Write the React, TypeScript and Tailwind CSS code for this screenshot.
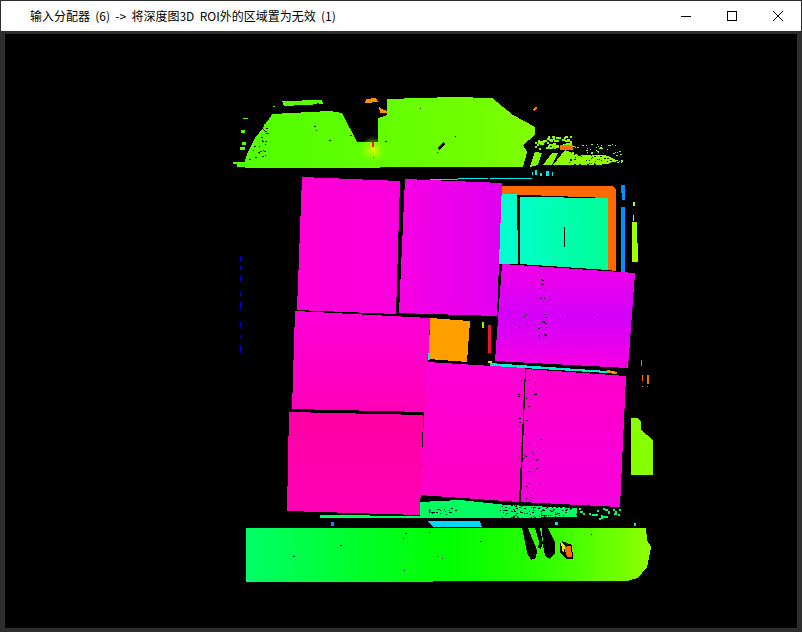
import React from 'react';

// deterministic speckle so the depth noise stays the same between renders.
// slant pushes the top rows to the right, size is the dot size in px
const speckle = (x: number, y: number, w: number, h: number, count: number, seed: number, size = 1, slant = 0) => {
  let s = seed;
  const rnd = () => {
    s = (s * 16807) % 2147483647;
    return s / 2147483647;
  };
  let d = '';
  for (let i = 0; i < count; i++) {
    const v = rnd();
    const u = rnd();
    const py = Math.round(y + v * h);
    const px = Math.round(x + (1 - v) * slant + u * (w - (1 - v) * slant));
    const sw = size + (rnd() > 0.6 ? 1 : 0);
    d += `M${px} ${py}h${sw}v${size}h-${sw}z`;
  }
  return d;
};

const DepthMap = () => (
  <svg viewBox="5 34 792 594" className="block w-full h-full" shapeRendering="crispEdges">
    <defs>
      <linearGradient id="topGreen" x1="233" x2="620" y1="0" y2="0" gradientUnits="userSpaceOnUse">
        <stop offset="0" stopColor="#50ff00" />
        <stop offset="0.35" stopColor="#60ff00" />
        <stop offset="0.7" stopColor="#78ff00" />
        <stop offset="1" stopColor="#98ff00" />
      </linearGradient>
      <linearGradient id="band" x1="246" x2="650" y1="0" y2="0" gradientUnits="userSpaceOnUse">
        <stop offset="0" stopColor="#00ff68" />
        <stop offset="0.25" stopColor="#00ff30" />
        <stop offset="0.5" stopColor="#00ff00" />
        <stop offset="0.75" stopColor="#30ff00" />
        <stop offset="1" stopColor="#90ff00" />
      </linearGradient>
      <linearGradient id="p1" x1="300" x2="400" y1="0" y2="0" gradientUnits="userSpaceOnUse">
        <stop offset="0" stopColor="#ff00d4" />
        <stop offset="1" stopColor="#fa00e0" />
      </linearGradient>
      <linearGradient id="p2" x1="400" x2="502" y1="0" y2="0" gradientUnits="userSpaceOnUse">
        <stop offset="0" stopColor="#f800e4" />
        <stop offset="1" stopColor="#e000f0" />
      </linearGradient>
      <linearGradient id="p3" x1="0" x2="0" y1="265" y2="370" gradientUnits="userSpaceOnUse">
        <stop offset="0" stopColor="#f000e6" />
        <stop offset="0.48" stopColor="#d400fa" />
        <stop offset="1" stopColor="#f800e0" />
      </linearGradient>
      <linearGradient id="p4" x1="0" x2="0" y1="311" y2="413" gradientUnits="userSpaceOnUse">
        <stop offset="0" stopColor="#ff00d8" />
        <stop offset="1" stopColor="#ff00b8" />
      </linearGradient>
      <linearGradient id="p5" x1="0" x2="0" y1="412" y2="514" gradientUnits="userSpaceOnUse">
        <stop offset="0" stopColor="#ff00a4" />
        <stop offset="1" stopColor="#ff00b4" />
      </linearGradient>
      <linearGradient id="p6" x1="0" x2="0" y1="362" y2="502" gradientUnits="userSpaceOnUse">
        <stop offset="0" stopColor="#ff00d8" />
        <stop offset="1" stopColor="#ff00c4" />
      </linearGradient>
      <linearGradient id="p7" x1="0" x2="0" y1="367" y2="507" gradientUnits="userSpaceOnUse">
        <stop offset="0" stopColor="#ff00cc" />
        <stop offset="1" stopColor="#f800dc" />
      </linearGradient>
      <linearGradient id="teal" x1="500" x2="608" y1="0" y2="0" gradientUnits="userSpaceOnUse">
        <stop offset="0" stopColor="#00ffd0" />
        <stop offset="1" stopColor="#00ff98" />
      </linearGradient>
      <radialGradient id="glow" cx="373" cy="150" r="14" gradientUnits="userSpaceOnUse">
        <stop offset="0" stopColor="#e0ff00" />
        <stop offset="1" stopColor="#80ff00" stopOpacity="0" />
      </radialGradient>
    </defs>

    {/* top shelf */}
    <polygon fill="url(#topGreen)" points="282,101 322,100 323,104 284,106" />
    <polygon
      fill="url(#topGreen)"
      points="272,114 330,111 342,113 357,142 378,142 378,118 387,115 387,99 453,97 492,98 513,115 535,127 535,135 523,145 527,152 523,167 245,168 245,160 248,152 255,138 263,128 270,118"
    />
    <path fill="url(#topGreen)" d={speckle(243, 118, 28, 48, 60, 17, 2, 24)} />
    <path fill="url(#topGreen)" d="M233 162h12v5h-8v-3h-4zM243 118h5v1h-5zM241 130h4v3h-4zM242 142h4v3h-4zM240 147h5v3h-5zM273 106h2v1h-2z" />
    <path fill="#000" d={speckle(245, 118, 22, 46, 34, 91, 1, 18)} />
    <path fill="#000" d={speckle(280, 100, 240, 62, 12, 33, 1)} />
    <circle cx="373" cy="150" r="14" fill="url(#glow)" />
    <rect x="372" y="142" width="2" height="5" fill="#ff1a00" />
    <polygon fill="#000" points="437,148 444,142 445,144 439,150" />
    <polygon fill="url(#topGreen)" points="530,167 535,152 542,153 538,165" />
    <polygon fill="url(#topGreen)" points="543,165 552,153 558,153 552,165" />
    <polygon fill="url(#topGreen)" points="553,165 565,150 578,155 606,155 618,161 600,165" />
    <path fill="url(#topGreen)" d={speckle(535, 136, 36, 12, 60, 53, 2)} />
    <path fill="url(#topGreen)" d={speckle(572, 144, 50, 20, 60, 19, 1)} />
    <path fill="#000" d={speckle(568, 150, 48, 15, 60, 71, 1)} />
    <polygon fill="#ff9000" points="366,99 376,98 378,102 365,103" />
    <polygon fill="#ff9000" points="379,107 382,109 387,111 388,113 380,113" />
    <polygon fill="#ff8000" points="533,109 536,107 537,108 534,111" />
    <rect x="560" y="145" width="13" height="5" fill="#ff7000" />
    <path fill="#00e8f0" d="M430 179h28v1h-28zM458 178h30v1h-30zM490 178h42v1h-42z" />
    <path fill="#00e8f0" d="M532 172h1v3h-1zM535 170h2v5h-2zM540 173h2v3h-2zM546 171h3v5h-3zM552 172h1v4h-1z" />

    {/* bins behind the boxes */}
    <polygon fill="#ff6a00" points="500,186 613,186 616,190 616,271 608,270 608,198 500,194" />
    <polygon fill="url(#teal)" points="500,194 517,194 518,264 497,264" />
    <polygon fill="url(#teal)" points="520,197 608,198 608,270 520,264" />
    <rect x="564" y="227" width="1" height="20" fill="#000" />
    <path fill="#0090ff" d="M621 185h4v15h-3zM621 207h4v65h-4z" />
    <polygon fill="#a4ff00" points="632,222 637,222 638,262 632,262" />
    <path fill="#a4ff00" d="M633 202h2v4h-2zM633 215h1v6h-1z" />

    {/* orange box in the gap */}
    <polygon fill="#ffa000" points="430,318 470,321 467,362 429,359" />
    <rect x="428" y="335" width="2" height="25" fill="#00e8e0" />
    <rect x="488" y="325" width="3" height="28" fill="#f01030" />
    <rect x="482" y="322" width="2" height="6" fill="#90ff00" />
    <polygon fill="#00f0d8" points="490,363 607,371 607,373 490,366" />
    <rect x="488" y="361" width="4" height="2" fill="#e0e000" />
    <polygon fill="#ff9000" points="607,370 617,372 617,374 607,373" />

    {/* boxes */}
    <polygon fill="url(#p1)" points="302,177 400,181 396,314 297,310" />
    <polygon fill="url(#p2)" points="405,179 502,183 497,316 399,313" />
    <polygon fill="url(#p3)" points="502,264 635,273 628,368 495,361" />
    <polygon fill="url(#p4)" points="295,311 430,318 426,412 292,409" />
    <polygon fill="url(#p5)" points="289,412 423,415 420,515 287,511" />
    <polygon fill="url(#p6)" points="427,362 525,368 519,502 420,495" />
    <polygon fill="url(#p7)" points="526,369 626,376 620,507 521,502" />
    <path fill="#000" d={speckle(538, 279, 8, 60, 24, 41, 1)} />
    <path fill="#000" d={speckle(518, 380, 22, 120, 44, 77, 1)} />
    <path fill="#000" d="M524 316h1v1h-1zM526 314h1v1h-1zM519 327h1v1h-1zM526 325h1v1h-1zM526 323h1v1h-1zM597 317h1v1h-1zM567 315h1v1h-1z" />

    {/* floor strip below the boxes */}
    <polygon fill="#00ff60" points="420,502 460,500 507,505 577,508 577,517 505,518 420,518" />
    <polygon fill="#00ff60" points="320,515 420,516 420,518 320,518" />
    <path fill="#00ff60" d={speckle(578, 508, 44, 10, 22, 23, 2)} />
    <path fill="#000" d={speckle(425, 508, 30, 6, 22, 37, 1)} />
    <path fill="#000" d={speckle(500, 505, 77, 13, 120, 47, 1)} />
    <polygon fill="#00d8ff" points="427,521 480,521 482,527 433,527" />
    <rect x="331" y="522" width="3" height="4" fill="#0090ff" />
    <rect x="555" y="522" width="3" height="3" fill="#00e0f0" />
    <rect x="634" y="523" width="2" height="3" fill="#00e0f0" />

    {/* front band */}
    <polygon fill="url(#band)" points="246,528 646,528 647,540 651,547 649,558 647,567 638,578 627,581 246,582" />
    <polygon fill="#000" points="522,528 528,528 537,550 536,558 531,560 527,553 525,542" />
    <polygon fill="#000" points="535,528 540,528 543,543 541,549 538,548 539,542" />
    <polygon fill="#000" points="542,528 548,528 555,542 555,553 550,559 545,556 543,545" />
    <polygon fill="#000" points="560,543 562,541 572,545 573,559 566,559 560,552" />
    <polygon fill="#ff6a00" points="564,546 571,546 572,557 567,557" />
    <polygon fill="#e8e800" points="561,542 565,546 564,553 562,550" />
    <path fill="#000" d={speckle(255, 532, 390, 46, 12, 11, 1)} />

    {/* right side pieces */}
    <polygon fill="#88ff00" points="631,418 638,418 641,422 641,430 653,440 653,475 631,475" />
    <path fill="#ff6a00" d="M641 360h1v6h-1zM642 375h1v6h-1zM647 375h2v9h-2zM642 386h1v1h-1zM647 386h1v1h-1z" />

    {/* stray blue readings on the left */}
    <path
      fill="#0000e0"
      d="M240 256h1v5h-1zM240 266h1v4h-1zM240 276h1v6h-1zM240 292h1v4h-1zM240 302h1v8h-1zM240 322h1v5h-1zM240 335h1v3h-1zM240 345h1v8h-1z"
    />
  </svg>
);

export default function App() {
  return (
    <div className="w-[802px] h-[632px] flex flex-col bg-[#2e2e2e] overflow-hidden pt-px px-px">
      <div className="h-[30px] shrink-0 flex items-center bg-white pl-[29px]">
        <span className="flex-1 text-[12px] text-black [word-spacing:2.6px] font-['Noto_Sans_CJK_SC','Noto_Sans',sans-serif]">
          输入分配器 (6) -&gt; 将深度图3D ROI外的区域置为无效 (1)
        </span>
        <div className="flex h-full">
          <div className="w-[46px] flex items-center justify-center">
            <svg width="10" height="10" viewBox="0 0 10 10" shapeRendering="crispEdges">
              <path d="M0 5.5h10" stroke="#000" fill="none" />
            </svg>
          </div>
          <div className="w-[46px] flex items-center justify-center">
            <svg width="10" height="10" viewBox="0 0 10 10" shapeRendering="crispEdges">
              <rect x="0.5" y="0.5" width="9" height="9" stroke="#000" fill="none" />
            </svg>
          </div>
          <div className="w-[46px] flex items-center justify-center">
            <svg width="10" height="10" viewBox="0 0 10 10">
              <path d="M0 0L10 10M10 0L0 10" stroke="#000" fill="none" />
            </svg>
          </div>
        </div>
      </div>
      <div className="flex-1 min-h-0 pt-[3px] pb-[4px] px-[4px]">
        <div className="w-full h-full bg-black">
          <DepthMap />
        </div>
      </div>
    </div>
  );
}
